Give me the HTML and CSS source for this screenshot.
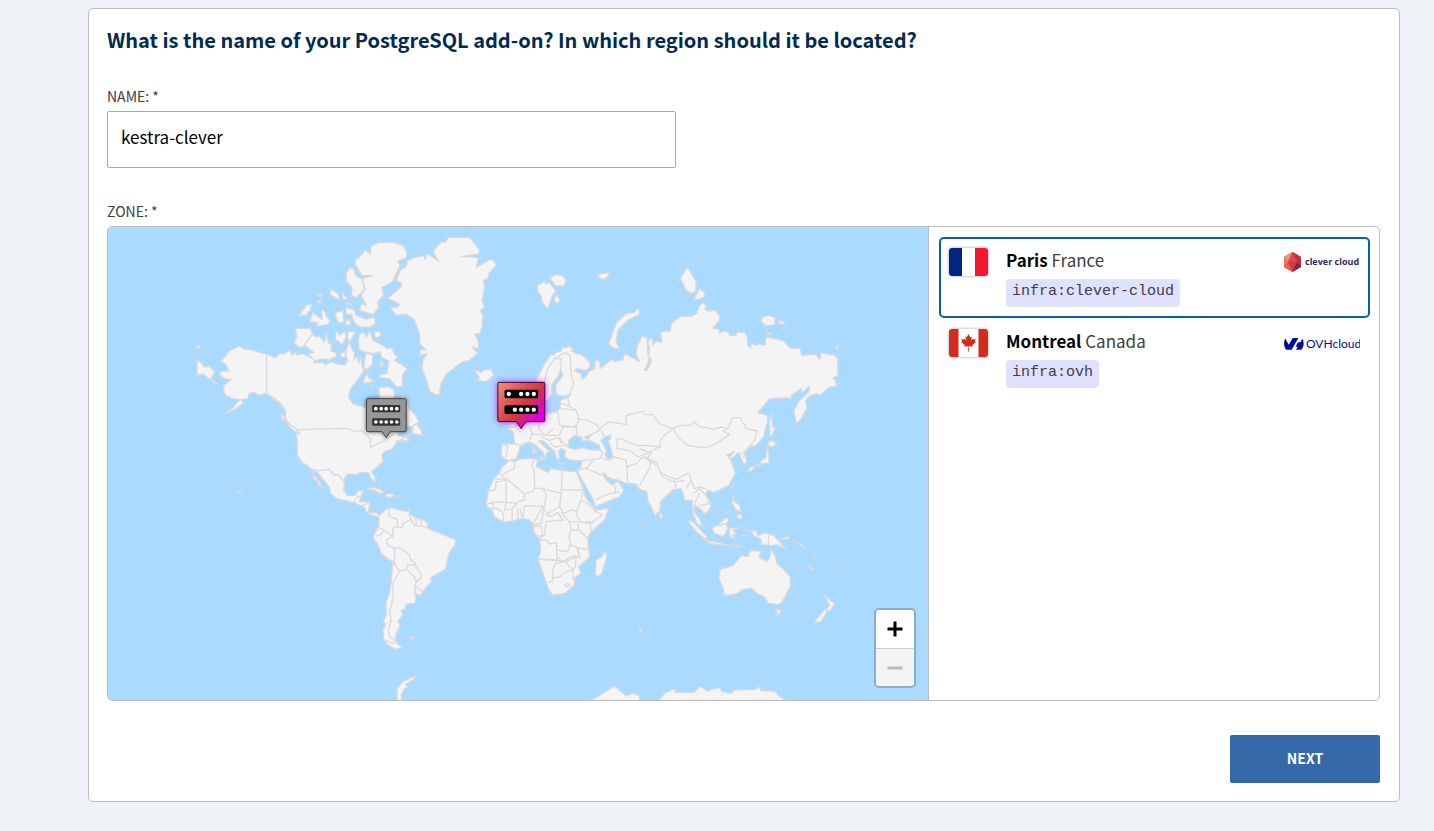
FILE: index.html
```html
<!DOCTYPE html>
<html lang="en">
<head>
<meta charset="utf-8">
<meta name="viewport" content="width=device-width, initial-scale=1">
<title>PostgreSQL add-on</title>
<link rel="stylesheet" href="styles.css">
</head>
<body>
<form class="card">
  <h1 class="title">What is the name of your PostgreSQL add-on? In which region should it be located?</h1>

  <div class="field">
    <label class="label" for="name">NAME: *</label>
    <input class="text-input" id="name" type="text" value="kestra-clever">
  </div>

  <div class="field">
    <div class="label" id="zone-label">ZONE: *</div>
    <div class="zone">
      <div class="map">
        <svg class="world" viewBox="-216 0 2463 1419" preserveAspectRatio="xMidYMid slice" role="img" aria-label="World map">
          <defs>
            <linearGradient id="hot" x1="0" y1="0" x2="1" y2="0.85">
              <stop offset="0" stop-color="#f19175"/><stop offset=".55" stop-color="#d13a46"/><stop offset=".6" stop-color="#cf3350"/><stop offset=".86" stop-color="#e000d8"/><stop offset="1" stop-color="#e600e6"/>
            </linearGradient>
            <filter id="glow" x="-30%" y="-30%" width="160%" height="160%"><feDropShadow dx="0" dy="0" stdDeviation="9" flood-color="#c02cff" flood-opacity="1"/></filter>
            <filter id="shade" x="-30%" y="-30%" width="160%" height="160%"><feDropShadow dx="0" dy="0" stdDeviation="7" flood-color="#000" flood-opacity=".6"/></filter>
          </defs>
          <g class="land">
            <!-- North and Central America -->
            <path d="M125 402 150 372 179 357 193 366 215 368 245 377 261 381 285 392 300 380 313 381 322 376 332 368 337 385 348 374 352 384 370 380 390 390 407 397 402 408 430 405 437 413 455 404 470 410 497 414 505 398 498 385 500 370 510 345 517 365 525 378 523 400 533 388 538 408 544 390 548 420 554 430 530 465 512 487 508 512 522 532 545 537 562 545 590 560 610 540 600 510 598 482 625 479 643 487 645 510 660 520 668 504 680 515 690 548 705 560 718 585 700 598 680 600 655 612 655 625 675 630 690 622 685 640 668 645 652 640 650 649 635 667 615 674 607 684 610 704 580 731 577 736 587 750 585 768 575 755 570 740 560 737 540 737 535 743 505 741 495 754 493 789 505 806 530 804 533 792 552 791 545 807 540 824 572 825 567 849 570 857 590 857 600 865 598 870 588 868 570 861 557 851 557 844 548 837 523 827 470 814 452 799 450 782 415 737 408 729 397 727 405 745 420 764 430 783 415 770 412 760 400 754 405 748 395 727 382 714 368 707 354 684 352 612 335 598 318 575 318 550 300 525 285 520 270 505 255 500 235 505 225 495 208 500 205 515 185 517 192 530 165 547 137 560 160 542 182 518 160 515 140 505 133 495 133 475 155 458 135 455 118 440 130 432 148 432 140 415Z"/>
            <path class="line" d="M261 381V500L288 515 320 555M352 608 508 604 525 614 545 610 573 635 573 662 605 645 620 637 645 620M395 727 412 732 448 727 465 744 475 742 495 766M523 827 530 812 545 807M548 837 572 825M570 857 567 849"/>
            <path d="M53 353 65 360 53 364ZM53 395 75 420 90 418 106 435 92 458 70 440 53 445ZM97 460 115 470 105 471ZM305 562 315 568 313 582 306 574ZM315 583 350 605 362 622 335 605Z"/>
            <!-- Canadian Arctic -->
            <path d="M575 57 600 47 640 45 672 56 683 80 678 94 655 102 662 116 638 165 607 182 613 203 595 225 597 243 580 262 540 250 545 230 560 235 545 205 558 185 548 155 580 146 547 145 527 112 527 98 540 90 558 68 573 82ZM510 122 522 125 528 145 547 155 556 187 530 212 515 205 518 182 500 162 500 140ZM452 185 475 200 480 217 470 214 453 203ZM488 195 504 217 490 218ZM413 205 428 201 424 210ZM412 225 428 217 422 228ZM358 266 380 235 396 230 393 248 380 264ZM400 257 428 277 426 250 434 250 440 268 452 280 445 292 410 298 416 286 390 284ZM467 258 490 250 493 285 475 288ZM498 240 525 250 530 265 560 276 585 270 588 290 570 301 540 299 525 288 515 262 500 262ZM498 228 515 230 515 233ZM498 285 508 275 514 294 498 294ZM347 304 392 304 398 322 380 345 378 353 362 363 344 347 352 330ZM380 345 398 322 412 330 418 326 435 345 440 318 448 350 455 345 455 372 470 378 470 390 448 398 422 396 408 402 384 382 402 376 375 355ZM468 318 475 313 480 325 496 313 500 332 486 355 480 345 468 338ZM505 312 528 315 510 345 505 335ZM540 320 555 317 560 333 570 312 580 340 590 345 610 355 622 365 637 362 645 382 655 390 645 400 665 412 683 425 670 443 667 480 650 478 630 455 600 452 598 444 622 440 628 402 605 390 602 375 580 380 550 373 538 365 537 335ZM585 314 598 313 605 325 595 333 585 328ZM560 377 580 385 578 412 560 430 553 420 556 395ZM605 398 612 412 602 420ZM562 440 570 455 585 462 560 468 550 465ZM570 475 580 475 575 480ZM480 382 495 374 500 385 490 393Z"/>
            <path d="M700 598 710 590 725 610 730 625 700 620ZM662 640 690 625 680 642Z"/>
            <!-- Greenland and Iceland -->
            <path d="M806 31H870L901 70 895 82 845 88 885 90 897 92 890 122 930 98 945 102 950 115 928 140 926 155 912 160 915 180 908 220 915 242 902 250 910 262 908 298 902 318 886 322 897 345 898 365 878 360 895 378 870 400 848 405 800 442 785 470 780 500 773 505 750 492 742 462 728 425 730 402 742 380 722 384 722 368 740 370 721 350 720 320 704 278 680 262 650 265 633 243 655 240 660 232 625 213 665 180 665 168 650 160 662 130 680 118 683 102 705 92 735 85 735 98 745 80 778 104 763 80 765 68 784 46 800 44ZM885 432 898 430 903 438 918 428 935 428 943 445 920 464 895 460 900 450Z"/>
            <!-- South America -->
            <path transform="translate(120 639)" d="M478 228 500 208 512 202 530 208 560 214 568 210 570 222 590 235 612 240 625 250 625 265 640 272 707 298 707 315 688 340 678 388 635 412 635 425 610 455 602 467 586 460 590 475 585 490 560 493 557 507 545 510 550 525 535 545 543 555 530 580 527 598 535 612 548 622 530 628 505 615 493 598 490 570 500 550 490 548 500 525 500 485 510 460 515 430 520 365 510 360 485 340 473 310 460 293 468 275 478 255Z"/>
            <g class="line" transform="translate(120 639)"><path d="M510 204 508 228 533 238 535 260 520 265 520 290 490 268 478 262 472 272M470 288 485 283 492 270M568 222 575 238 550 252 548 262 535 260M575 238 585 256 625 262M590 235 590 255M605 240 605 256M520 290 500 300 505 315 525 325 540 322 570 345 572 358 587 368 588 378 605 400 605 415 590 425 587 438 610 455M525 325 525 365 530 380 540 393 560 388 565 375 587 375M560 388 585 410 588 420 600 422M540 393 520 430 522 465 510 520 515 540 507 570 510 590 527 600M520 365 530 380M527 598 525 610 510 608 500 600M587 438 585 460"/></g>
            <g transform="translate(120 639)"><path d="M440 148 458 142 480 147 495 158 480 160 465 150ZM497 165 510 160 528 168 510 172 500 170ZM478 167 486 170ZM537 167 546 170 540 171ZM478 118 483 124ZM480 135 483 138ZM43 149 50 150ZM50 150 60 156 66 164ZM568 595 586 590 578 598ZM533 785 533 745 550 725 587 708 585 716 558 733 565 742 555 745 545 765 547 785Z"/></g>
            <!-- Africa -->
            <g transform="translate(870 639)">
              <path d="M118 62 135 65 150 58 195 55 205 60 200 80 235 97 245 85 280 92 320 95 325 105 342 150 350 175 375 203 380 210 418 205 405 240 365 275 355 295 357 325 361 350 328 380 333 400 315 415 315 435 287 460 250 465 238 450 205 357 215 330 210 297 193 275 193 255 180 240 160 235 130 243 103 247 75 230 65 205 55 203 50 190 57 150 75 112 90 100 95 85ZM408 333 412 350 398 398 388 411 377 402 380 360 395 352Z"/>
              <path class="line" d="M135 65 135 85 95 105 110 122 110 185 65 188 75 205M110 122 75 115M57 153 78 150 80 125 95 125M110 115 165 162 190 155 195 145 195 100 187 75 195 55M165 162 165 180 145 185 130 205 105 212 110 187 145 190M195 145 215 145 275 160 278 92M278 150H342M215 142 230 160 225 200 165 197 160 235M55 190 72 190M65 207 85 205 100 218 103 245M128 210V243M145 205V240M152 205 158 237M275 160 270 200 232 222 220 200 195 245 190 255M225 200 215 250 193 255M230 225 245 230 265 218 280 240 230 245 225 285 210 295M270 200 282 220 310 210 322 215M275 215 290 235 300 245 325 245 360 250 375 245M342 150 335 180 320 215 325 235 340 248 370 245 400 225 380 215 355 190 335 182M375 203 375 220M300 245 305 270 298 290 305 315 330 325 355 328M325 250 328 270 310 270M362 250 365 275M305 270 330 272 355 295M195 260 215 258 220 285 200 290M210 300 230 300 240 312 260 308 262 330 295 335 300 315 320 320 328 345M262 330 262 360 205 357M262 350 280 365 305 350 320 348 332 355 325 325M205 357 290 365 320 350 318 380 310 390 290 368M258 370 250 390 248 425 235 425M258 370 290 365M250 415 270 410 290 395 310 390 310 415 315 420M286 435 295 430 302 436 292 442Z"/>
            </g>
            <!-- Europe and Asia -->
            <path d="M1070 460 1095 410 1115 382 1125 383 1130 375 1145 372 1148 360 1162 362 1165 357 1182 366 1175 372 1190 380 1205 382 1230 405 1232 420 1220 430 1192 425 1185 432 1205 440 1207 458 1220 448 1230 432 1247 425 1247 400 1260 402 1262 425 1290 402 1300 398 1305 404 1330 398 1335 380 1380 403 1370 385 1372 360 1388 327 1403 332 1405 375 1408 400 1395 430 1403 430 1414 407 1415 395 1408 392 1410 360 1405 350 1412 332 1420 340 1420 355 1430 342 1447 347 1443 315 1472 312 1475 292 1485 282 1505 268 1535 268 1552 258 1560 235 1572 227 1582 240 1575 246 1585 252 1607 250 1622 270 1618 282 1600 303 1620 308 1620 320 1630 312 1648 316 1650 325 1670 325 1672 316 1695 316 1703 330 1705 355 1713 363 1718 350 1730 355 1740 350 1750 355 1758 352 1758 332 1780 333 1813 342 1832 363 1862 365 1867 385 1910 382 1918 397 1923 392 1923 377 1965 385 1975 395 1975 445 1960 453 1968 460 1970 478 1950 480 1922 505 1910 500 1890 507 1878 520 1882 545 1865 575 1850 588 1843 550 1860 520 1888 495 1890 477 1868 497 1865 485 1835 505 1835 515 1820 512 1770 515 1735 557 1763 565 1765 580 1752 630 1728 657 1710 657 1695 680 1703 705 1693 712 1680 684 1678 677 1655 694 1650 689 1665 674 1642 684 1655 701 1667 739 1650 774 1602 797 1585 789 1578 804 1595 829 1593 844 1577 861 1560 844 1545 834 1543 854 1560 874 1567 899 1552 889 1540 859 1538 821 1517 821 1505 784 1480 789 1442 824 1442 849 1427 866 1405 819 1402 794 1380 787 1370 771 1335 767 1310 757 1300 758 1285 750 1270 734 1275 752 1285 764 1300 774 1313 761 1333 789 1320 809 1248 839 1242 819 1200 744 1195 732 1203 724 1208 701 1170 699 1155 689 1157 671 1145 665 1138 672 1140 699 1130 692 1125 674 1105 654 1095 644 1086 640 1078 642 1110 674 1102 677 1096 694 1090 674 1065 652 1050 645 1035 650 1020 660 1018 675 1010 694 988 701 965 689 967 651 1005 651 1002 615 985 605 1010 598 1020 590 1045 590 1075 575 1100 560 1130 555 1142 545 1143 520 1165 512 1175 502 1150 508 1130 500 1128 475 1150 445 1143 425 1140 440 1118 472 1117 500 1105 520 1090 520 1070 495Z"/>
            <path class="line" d="M1095 520 1090 480 1105 425 1125 395 1145 395 1145 425M1125 395 1150 380 1160 378 1172 385 1175 440 1182 470 1170 500M1145 545 1190 550 1200 580 1185 600 1140 595 1135 555M1143 530 1165 535 1190 550M1165 515 1170 535M1190 575 1225 580 1255 595 1260 610 1220 630M1050 600 1060 620 1050 640M1075 575 1080 610 1100 625 1140 625 1150 600 1190 600 1195 635M1055 620 1100 625 1120 605M1085 630 1110 640 1135 632 1160 655 1190 660M1110 645 1125 660 1160 655M1140 630 1145 650M975 655 985 658 980 690M1005 651 1035 655M1253 662 1270 675 1262 695 1208 701M1203 728 1225 720 1240 700M1220 725 1270 745M1248 818 1290 800 1320 795M1310 775 1305 800M1265 690 1285 700 1305 690 1340 700 1345 765M1340 720 1370 710 1390 690 1410 695 1412 720 1395 750 1380 775M1280 640 1265 610 1265 600 1290 585 1340 592 1340 565 1390 553 1395 562 1420 563 1440 590 1480 605 1460 620 1442 640 1442 660 1400 655 1370 655 1325 635 1313 635 1313 665M1313 665 1350 670 1375 690 1400 680 1440 660M1380 665 1415 680 1400 695 1430 715M1480 605 1500 635 1525 655 1575 663 1610 650 1650 622 1630 612 1645 605 1660 572 1682 572 1700 605 1733 612 1725 640 1712 655M1480 605 1505 595 1535 595 1545 583 1558 598 1605 607 1625 600 1645 605M1410 700 1430 705 1445 740 1490 757 1525 740 1530 742 1535 760 1520 785M1440 735 1450 750 1485 765 1515 760M1485 760 1490 785M1535 760 1545 785 1560 780 1580 785M1540 800 1560 785 1580 805 1595 840M1545 830 1560 800M1560 835 1590 830M1680 684 1705 665 1710 657M1690 690 1700 680"/>
            <!-- Arctic Ocean and Pacific islands -->
            <path d="M1073 175 1095 163 1100 172 1108 165 1130 192 1118 205 1113 222 1105 245 1088 225 1085 205 1075 195ZM1110 152 1130 143 1150 147 1160 160 1153 177 1128 176ZM1128 208 1135 205 1142 222 1130 230 1124 220ZM1253 143 1288 137 1288 145 1270 160 1260 150ZM1288 350 1312 285 1340 260 1365 256 1370 248 1380 248 1378 263 1345 280 1315 310 1310 345 1320 366 1300 362ZM1524 120 1550 165 1548 195 1535 198 1520 190 1502 153ZM1560 185 1577 198 1573 212 1543 220ZM1748 270 1770 266 1787 272 1785 293 1756 296 1745 280ZM1795 280 1817 285 1810 293 1800 290ZM1762 315 1780 320 1762 322ZM1966 363 1975 353V365ZM1774 558 1780 600 1786 604 1778 625 1772 628 1770 580ZM1770 640 1792 648 1780 660 1765 655ZM1762 660 1768 680V708L1740 712 1745 702 1760 690ZM1735 707 1738 714 1710 722 1705 732 1715 732 1725 722M985 596 1005 590 1015 595 1000 602ZM1062 655 1068 672 1060 685ZM1075 690 1092 693 1087 700ZM1138 707 1155 710 1145 711Z"/>
            <g transform="translate(1380 639)">
              <path d="M62 215 70 228 65 236 60 228ZM144 242 158 243 202 290 198 297 175 280ZM195 300 250 310 250 316 210 310ZM217 265 240 252 258 233 268 238 260 255 266 265 252 290 225 280ZM270 265 300 262 280 272 290 282 278 285 288 297 270 290ZM280 168 285 185 300 195 305 215 290 210 278 190ZM290 230 305 220 308 235 300 237ZM260 222 270 208ZM285 130 275 144ZM313 258 320 270ZM305 287 330 285ZM333 272 350 273 355 288 375 278 400 285 418 303 438 325 410 315 390 317 365 312 365 298 345 288ZM422 298 445 297 450 288 432 293ZM255 315 300 320 310 317ZM290 325 303 320ZM458 298 470 307ZM475 307 500 326 485 318ZM522 347 532 360ZM508 377 524 388 516 389ZM582 362 596 359ZM395 325 402 342 408 347 413 372 427 382 452 410V440L427 488 417 493 387 490 375 470 355 462 335 445 305 450 295 460 270 466 250 464 253 450 238 415 242 388 280 377 305 347 325 350 333 332 365 334 358 350 382 365 390 355ZM407 505 425 513 417 527ZM552 463 570 480 586 492 568 515 562 510 570 495ZM558 506 562 515 545 545 523 547ZM0 565 8 572 0 577Z"/>
              <path class="line" d="M387 285V315M235 258 262 250"/>
              <path d="M55 785 75 760 105 747 108 757 165 757 182 738 203 753 240 742 248 755 275 760 285 750 350 748 355 738 365 752 408 754 415 765 435 780 460 785Z"/>
              <path d="M-150 785-75 738-40 768-20 760 0 768 0 785Z"/>
            </g>
          </g>
          <g class="water">
            <path d="M1165 660 1168 640 1185 625 1205 630 1210 642 1230 640 1260 655 1262 670 1230 668 1210 662 1185 668ZM1215 630 1235 625 1225 638Z"/>
            <path d="M1265 640 1280 628 1295 625 1292 638 1285 642 1293 660 1300 692 1285 696 1277 685 1280 670Z"/>
          </g>
          <!-- Montreal -->
          <g filter="url(#shade)"><path d="M565 515H676Q680 515 680 519V610Q680 614 676 614H632L620 632 608 614H565Q561 614 561 610V519Q561 515 565 515Z" fill="#969696" stroke="#444" stroke-width="3"/></g>
          <rect x="578" y="534" width="84" height="22" rx="4" fill="#333"/><rect x="578" y="574" width="84" height="22" rx="4" fill="#333"/>
          <path class="dots" stroke-width="11" d="M589 545h0M605 545h0M620 545h0M636 545h0M652 545h0M589 585h0M605 585h0M620 585h0M636 585h0M652 585h0"/>
          <!-- Paris -->
          <g filter="url(#glow)"><path d="M959 466H1092Q1096 466 1096 470V580Q1096 584 1092 584H1039L1025 605 1011 584H959Q955 584 955 580V470Q955 466 959 466Z" fill="url(#hot)" stroke="#34051f" stroke-width="3"/></g>
          <rect x="975" y="488" width="101" height="26" rx="5"/><rect x="975" y="535" width="101" height="26" rx="5"/>
          <path class="dots" stroke-width="13" d="M988 501h0M1025 501h0M1044 501h0M1063 501h0M1006 548h0M1025 548h0M1044 548h0M1063 548h0"/>
        </svg>
        <div class="zoom">
          <button class="zoom-button" type="button" aria-label="Zoom in"><svg width="16" height="16" viewBox="0 0 16 16"><path d="M8 .5v15M.5 8h15" stroke="#000" stroke-width="3"/></svg></button>
          <button class="zoom-button" type="button" aria-label="Zoom out" disabled><svg width="16" height="16" viewBox="0 0 16 16"><path d="M.5 8h15" stroke="#bbb" stroke-width="3"/></svg></button>
        </div>
      </div>
      <div class="zone-list" role="radiogroup" aria-labelledby="zone-label">
        <label class="zone-item">
          <input class="zone-radio" type="radio" name="zone" checked>
          <svg class="flag" viewBox="0 0 39 28"><path fill="#fff" d="M0 0h39v28H0z"/><path fill="#00267f" d="M0 0h13v28H0z"/><path fill="#f31830" d="M26 0h13v28H26z"/></svg>
          <span class="zone-text"><span><strong class="city">Paris</strong> France</span><code class="tag">infra:clever-cloud</code></span>
          <svg class="logo" viewBox="0 0 76 20" role="img" aria-label="clever cloud">
            <path fill="#cf3942" d="M8.500 0 17 5v10l-8.500 5L0 15V5z"/><path fill="#f19175" d="M8.500 0 0 5l4 5z"/><path fill="#ec7c67" d="M0 5v10l4-5z"/><path fill="#e46056" d="m0 15 4-5 4.500 10z"/><path fill="#da4b4c" d="M8.500 0 4 10h9z"/><path fill="#c9303f" d="M8.500 0 17 5l-4 5z"/><path fill="#ae3040" d="M17 5v10l-4-5z"/><path fill="#8c2147" d="m17 15-4-5-4.500 10z"/>
            <text class="clever" x="21" y="13">clever cloud</text>
          </svg>
        </label>
        <label class="zone-item">
          <input class="zone-radio" type="radio" name="zone">
          <svg class="flag" viewBox="0 0 39 28"><path fill="#fff" d="M0 0h39v28H0z"/><path fill="#d52b1e" d="M0 0h9.500v28H0zM29.500 0H39v28h-9.500z"/><path fill="#d52b1e" d="m19.500 5 1.700 3.200 1.500-.8-.7 4 2-2 .5 1.200 2.200-.4-.8 2.300 1 .6-3.700 3.200.4 1.500-3.800-.6.200 5.300h-.9l.2-5.300-3.900.6.400-1.500-3.700-3.200 1-.6-.8-2.300 2.200.4.500-1.200 2 2-.7-4 1.500.8z"/></svg>
          <span class="zone-text"><span><strong class="city">Montreal</strong> Canada</span><code class="tag">infra:ovh</code></span>
          <svg class="logo" viewBox="0 0 76 20" role="img" aria-label="OVHcloud">
            <path fill="#000e9c" transform="translate(0 1) scale(.82)" d="M19.881 10.095l2.563-4.450C23.434 7.389 24 9.404 24 11.555c0 2.880-1.017 5.523-2.710 7.594h-6.620l2.040-3.541h-2.696l3.176-5.513h2.691zM17.561 4.852 9.333 19.140l.003.009H2.709C1.014 17.077 0 14.435 0 11.555c0-2.152.570-4.170 1.561-5.918L5.855 13.100l4.758-8.248h6.948z"/>
            <text class="ovh" x="22" y="15">OVHcloud</text>
          </svg>
        </label>
      </div>
    </div>
  </div>

  <div class="actions"><button class="next" type="submit">NEXT</button></div>
</form>
</body>
</html>
```
FILE: styles.css
```css
* { box-sizing: border-box; }

body {
  margin: 0;
  padding: 8px 34px 28px 88px;
  background: #eff3f8;
  font-family: "Noto Sans CJK SC", "Noto Sans", sans-serif;
  font-size: 17px;
  line-height: 24px;
  color: #404040;
}

.card {
  display: flex;
  flex-direction: column;
  padding: 17px 19px 18px 18px;
  background: #fff;
  border: 1px solid #bcbcbc;
  border-radius: 5px;
}

.title {
  margin: 0 0 32px;
  font-size: 20px;
  line-height: 28px;
  font-weight: 700;
  color: #012a51;
}

.field {
  display: flex;
  flex-direction: column;
  margin-bottom: 34px;
}

.field + .field { margin-top: -1px; }

.label {
  font-size: 14px;
  line-height: 20px;
  margin-bottom: 5px;
}

.text-input {
  width: 569px;
  max-width: 100%;
  height: 57px;
  padding: 0 13px 6px;
  border: 1px solid #aaa;
  border-radius: 2px;
  background: #fff;
  font: inherit;
  color: #000;
}

.zone {
  display: grid;
  grid-template-columns: minmax(0, 1fr) 451px;
  min-height: 475px;
  border: 1px solid #bcbcbc;
  border-radius: 5px;
  overflow: hidden;
}

.map {
  position: relative;
  background: #aadaff;
}

.world {
  position: absolute;
  inset: 0;
  width: 100%;
  height: 100%;
}

.land {
  fill: #f4f4f4;
  stroke: #dadada;
  stroke-width: 4;
  stroke-linejoin: round;
}

.line { fill: none; }

.water {
  fill: #aadaff;
  stroke: #dadada;
  stroke-width: 4;
}

.dots {
  stroke: #fff;
  stroke-linecap: round;
}

.zoom {
  position: absolute;
  right: 12px;
  bottom: 12px;
  display: flex;
  flex-direction: column;
  border: 2px solid rgba(0, 0, 0, 0.2);
  border-radius: 5px;
  background-clip: padding-box;
}

.zoom-button {
  display: grid;
  place-items: center;
  width: 38px;
  height: 38px;
  padding: 0;
  border: 0;
  border-radius: 3px 3px 0 0;
  background: #fff;
}

.zoom-button:disabled {
  border-top: 1px solid #ccc;
  border-radius: 0 0 3px 3px;
  background: #f4f4f4;
}

.zone-list {
  display: flex;
  flex-direction: column;
  padding: 10px 9px 10px 10px;
  border-left: 1px solid #bcbcbc;
}

.zone-item {
  display: flex;
  align-items: flex-start;
  gap: 18px;
  padding: 8px;
  border: 2px solid transparent;
  border-radius: 5px;
}

.zone-item:has(:checked) { border-color: #0061bd; }

.zone-radio {
  position: absolute;
  opacity: 0;
  pointer-events: none;
}

.flag {
  width: 39px;
  height: 28px;
  margin-top: 1px;
  border-radius: 3px;
  box-shadow: 0 0 3px rgba(0, 0, 0, 0.4);
}

.zone-text {
  display: flex;
  flex: 1;
  flex-direction: column;
  align-items: flex-start;
  gap: 7px;
  padding: 1px 0;
}

.city { color: #000; }

.tag {
  padding: 1px 6px 3px;
  border-radius: 4px;
  background: #e0e0ff;
  font-family: "Liberation Mono", monospace;
  font-size: 15px;
}

.logo {
  width: 76px;
  height: 20px;
  margin-top: 5px;
}

.clever {
  font-family: "Open Sans", sans-serif;
  font-size: 9px;
  font-weight: 700;
  fill: #2f2c5b;
}

.ovh {
  font-family: Lato, sans-serif;
  font-size: 12px;
  fill: #000e9c;
}

.actions {
  display: flex;
  justify-content: flex-end;
}

.next {
  width: 150px;
  height: 48px;
  padding: 0 0 3px;
  border: 0;
  border-radius: 2px;
  background: #3569aa;
  font-family: inherit;
  font-size: 14px;
  font-weight: 700;
  color: #fff;
}
```
